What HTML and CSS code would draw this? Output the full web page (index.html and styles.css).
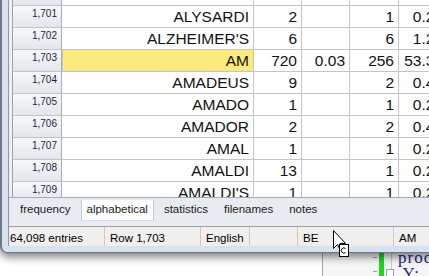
FILE: index.html
```html
<!DOCTYPE html>
<html lang="en">
<head>
    <meta charset="UTF-8">
    <meta name="viewport" content="width=device-width, initial-scale=1.0">
    <title>Word list</title>
    <link rel="stylesheet" href="styles.css">
</head>
<body>
    <div class="screen">
        <!-- editor window behind -->
        <div class="backwin">
            <div class="gutter">
                <span class="dash"></span>
                <span class="dash"></span>
            </div>
            <div class="changebar"></div>
            <div class="fold"><span class="foldbox"></span></div>
            <pre class="code">proc
 Y:</pre>
        </div>

        <div class="window">
            <div class="panel">
                <div class="gridwrap">
                    <div class="grid">
                        <div class="row"><div class="rh"></div><div class="cell"></div><div class="cell"></div><div class="cell"></div><div class="cell"></div><div class="cell"></div></div>
                        <div class="row"><div class="rh">1,701</div><div class="cell">ALYSARDI</div><div class="cell">2</div><div class="cell"></div><div class="cell">1</div><div class="cell">0.21</div></div>
                        <div class="row"><div class="rh">1,702</div><div class="cell">ALZHEIMER'S</div><div class="cell">6</div><div class="cell"></div><div class="cell">6</div><div class="cell">1.25</div></div>
                        <div class="row"><div class="rh">1,703</div><div class="cell sel">AM</div><div class="cell">720</div><div class="cell">0.03</div><div class="cell">256</div><div class="cell">53.33</div></div>
                        <div class="row"><div class="rh">1,704</div><div class="cell">AMADEUS</div><div class="cell">9</div><div class="cell"></div><div class="cell">2</div><div class="cell">0.42</div></div>
                        <div class="row"><div class="rh">1,705</div><div class="cell">AMADO</div><div class="cell">1</div><div class="cell"></div><div class="cell">1</div><div class="cell">0.21</div></div>
                        <div class="row"><div class="rh">1,706</div><div class="cell">AMADOR</div><div class="cell">2</div><div class="cell"></div><div class="cell">2</div><div class="cell">0.42</div></div>
                        <div class="row"><div class="rh">1,707</div><div class="cell">AMAL</div><div class="cell">1</div><div class="cell"></div><div class="cell">1</div><div class="cell">0.21</div></div>
                        <div class="row"><div class="rh">1,708</div><div class="cell">AMALDI</div><div class="cell">13</div><div class="cell"></div><div class="cell">1</div><div class="cell">0.21</div></div>
                        <div class="row"><div class="rh">1,709</div><div class="cell">AMALDI'S</div><div class="cell">1</div><div class="cell"></div><div class="cell">1</div><div class="cell">0.21</div></div>
                    </div>
                </div>

                <div class="tabs">
                    <div class="tab">frequency</div>
                    <div class="tab active">alphabetical</div>
                    <div class="tab">statistics</div>
                    <div class="tab">filenames</div>
                    <div class="tab">notes</div>
                </div>

                <div class="status">
                    <div class="pane first">64,098 entries</div>
                    <div class="pane">Row 1,703</div>
                    <div class="pane narrow">English</div>
                    <div class="pane narrow"></div>
                    <div class="pane">BE</div>
                    <div class="pane last">AM</div>
                </div>
            </div>
        </div>

        <!-- mouse pointer -->
        <svg class="cursor" width="18" height="29" viewBox="0 0 18 29">
            <path d="M1.5 1.5 V19.5 L5.6 15.4 L8.6 22 L11 21 L8 14.4 H13.5 Z" fill="#fff" stroke="#000" stroke-width="1"/>
            <rect x="7.5" y="15.5" width="9" height="12" fill="#fff" stroke="#000"/>
            <path d="M13.5 19.5 A2.6 2.6 0 1 0 13.5 23.5" fill="none" stroke="#000"/>
        </svg>
    </div>
</body>
</html>
```

FILE: styles.css
```css
body {
    margin: 0;
    background-color: #fff;
    font-family: "Liberation Sans", Arial, sans-serif;
}
.screen {
    position: relative;
    width: 429px;
    height: 276px;
    overflow: hidden;
    background-color: #fff;
}

/* main window */
.window {
    position: relative;
    z-index: 1;
    width: 470px;
    padding: 0 0 6px 6px;
    background-color: #d6e2ef;
    border-left: 2px solid #6e7783;
    border-bottom: 1px solid #6e7783;
    border-bottom-left-radius: 7px;
    box-shadow: 0 4px 9px rgba(0, 0, 0, 0.5);
}
.panel {
    border-left: 1px solid #8d97a4;
    background-color: #eef0f3;
}
.gridwrap {
    height: 197px;
    overflow: hidden;
    padding-left: 3px;
    border-bottom: 1px solid #a3abb6;
}
.grid {
    margin-top: -16px;
    border-left: 1px solid #a0a0a0;
    background-color: #fff;
}
.row {
    display: grid;
    grid-template-columns: 49px 192px 48px 48px 49px 49px;
    height: 22px;
}
.rh,
.cell {
    box-sizing: border-box;
    height: 22px;
    border-right: 1px solid #c4c4c4;
    border-bottom: 1px solid #c4c4c4;
    text-align: right;
    white-space: nowrap;
    overflow: hidden;
}
.rh {
    padding: 1px 4px 0 0;
    font-size: 10px;
    line-height: 13px;
    color: #1c1c48;
    background: linear-gradient(#f7f8fa, #e3e6eb);
    border-right-color: #a9adb4;
}
.cell {
    padding-right: 4px;
    font-size: 15.5px;
    line-height: 21px;
    color: #111;
}
.sel {
    background-color: #fde97c;
    box-shadow: inset 1px 0 #bccbdc;
}

/* tabs */
.tabs {
    display: flex;
    gap: 4px;
    height: 28px;
    padding-left: 5px;
    background-color: #e8ebf0;
    font-size: 11.5px;
    color: #1a1a1a;
}
.tab {
    box-sizing: border-box;
    height: 21px;
    margin-top: 2px;
    padding: 0 6px 3px;
    line-height: 18px;
}
.tab.active {
    padding: 0 5px 3px;
    background-color: #fff;
    border-left: 1px solid #b3cbe4;
    border-right: 1px solid #b3cbe4;
    border-bottom: 1px solid #d3dde8;
}

/* status bar */
.status {
    display: flex;
    height: 19px;
    border-top: 1px solid #a2a2a2;
    background-color: #f0efed;
    font-size: 11.5px;
    color: #000;
}
.pane {
    box-sizing: border-box;
    width: 96px;
    padding: 5px 0 0 5px;
    line-height: 13px;
    border-right: 1px solid #c9c9c9;
    white-space: nowrap;
}
.pane.first {
    padding-left: 1px;
}
.pane.narrow {
    width: 49px;
}
.pane.narrow + .pane.narrow {
    width: 48px;
}
.pane.last {
    flex: 1;
    border-right: none;
}

/* window behind */
.backwin {
    position: absolute;
    left: 322px;
    top: 236px;
    width: 120px;
    height: 50px;
    display: flex;
    background-color: #f6f6f6;
    border-left: 1px solid #a8a8a8;
}
.gutter {
    width: 56px;
}
.dash {
    display: block;
    width: 4px;
    height: 1px;
    margin: 21px 0 0 50px;
    background-color: #9a9a9a;
}
.dash + .dash {
    margin-top: 13px;
}
.changebar {
    width: 5px;
    background-color: #22d622;
}
.fold {
    width: 7px;
    border-right: 1px solid #c8c8c8;
}
.foldbox {
    display: block;
    width: 6px;
    height: 6px;
    margin: 33px 0 0 2px;
    border: 1px solid #a0a0a0;
    background-color: #fff;
}
.code {
    margin: 14px 0 0 6px;
    font-family: "Liberation Serif", "Times New Roman", serif;
    font-size: 17px;
    line-height: 16px;
    letter-spacing: 1px;
    color: #2d1f7c;
}

.cursor {
    position: absolute;
    z-index: 2;
    left: 332px;
    top: 229px;
}
```
